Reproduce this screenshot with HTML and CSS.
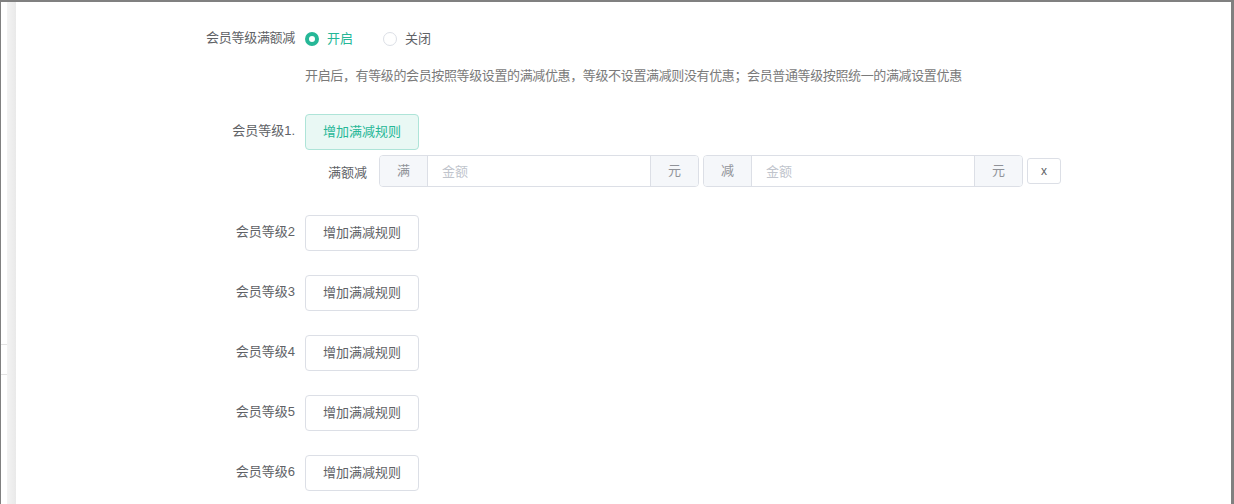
FILE: index.html
```html
<!DOCTYPE html>
<html lang="zh-CN">
  <head>
    <meta charset="UTF-8" />
    <meta name="viewport" content="width=device-width, initial-scale=1.0" />
    <title>会员等级满额减</title>
    <link rel="stylesheet" href="styles.css">
  </head>
  <body>
    <div class="frame">
      <div class="side">
        <div class="side-white"><div class="side-lines"></div></div>
        <div class="side-gray"></div>
      </div>
      <div class="main">
        <div class="form">
          <div class="row row-switch">
            <span class="label">会员等级满额减</span>
            <div class="radios">
              <span class="radio checked"><i class="dot"></i>开启</span>
              <span class="radio"><i class="dot"></i>关闭</span>
            </div>
          </div>
          <p class="tip">开启后，有等级的会员按照等级设置的满减优惠，等级不设置满减则没有优惠；会员普通等级按照统一的满减设置优惠</p>

          <div class="row row-first">
            <span class="label">会员等级1.</span>
            <span class="button active">增加满减规则</span>
          </div>
          <div class="rule">
            <span class="rule-label">满额减</span>
            <div class="group">
              <span class="addon">满</span>
              <input type="text" placeholder="金额" />
              <span class="addon addon-end">元</span>
            </div>
            <div class="group">
              <span class="addon">减</span>
              <input type="text" placeholder="金额" />
              <span class="addon addon-end">元</span>
            </div>
            <span class="close">x</span>
          </div>

          <div class="row row-level">
            <span class="label">会员等级2</span>
            <span class="button">增加满减规则</span>
          </div>
          <div class="row">
            <span class="label">会员等级3</span>
            <span class="button">增加满减规则</span>
          </div>
          <div class="row">
            <span class="label">会员等级4</span>
            <span class="button">增加满减规则</span>
          </div>
          <div class="row">
            <span class="label">会员等级5</span>
            <span class="button">增加满减规则</span>
          </div>
          <div class="row">
            <span class="label">会员等级6</span>
            <span class="button">增加满减规则</span>
          </div>
        </div>
      </div>
    </div>
  </body>
</html>
```

FILE: styles.css
```css
* {
  margin: 0;
  padding: 0;
  box-sizing: border-box;
}
body {
  font-family: "Liberation Sans", "Noto Sans CJK SC", sans-serif;
  font-size: 13px;
  color: #606266;
  background: #fff;
}
.frame {
  display: flex;
  width: 1234px;
  height: 504px;
  overflow: hidden;
  border-top: 2px solid #808080;
  border-left: 1px solid #808080;
  border-right: 3px solid #808080;
}
.side {
  display: flex;
  flex: none;
}
.side-white {
  width: 6px;
}
.side-lines {
  margin-top: 342px;
  height: 31px;
  border-top: 1px solid #e3e3e3;
  border-bottom: 1px solid #e3e3e3;
}
.side-gray {
  width: 9px;
  background: linear-gradient(to right, #f3f3f3, #e9e9e9);
}
.main {
  flex: 1;
}
.form {
  padding-left: 159px;
  padding-top: 25px;
}
.row {
  display: flex;
  align-items: center;
  height: 36px;
  margin-top: 24px;
}
.label {
  width: 130px;
  padding-right: 10px;
  text-align: right;
  flex: none;
  line-height: 18px;
  padding-bottom: 2px;
}
.row-switch {
  height: 24px;
  margin-top: 0;
}
.row-switch .label {
  letter-spacing: -0.3px;
}
.radios {
  display: flex;
  align-items: center;
}
.radio {
  display: flex;
  align-items: center;
  margin-right: 30px;
  line-height: 20px;
}
.radio .dot {
  display: inline-block;
  width: 14px;
  height: 14px;
  border: 1px solid #dcdfe6;
  border-radius: 50%;
  margin-right: 8px;
  background: #fff;
}
.radio.checked {
  color: #26b797;
}
.radio.checked .dot {
  border: 4px solid #26b797;
  background: #fff;
}
.tip {
  margin-top: 15px;
  margin-left: 130px;
  line-height: 20px;
  color: #7a7a7a;
  letter-spacing: -0.37px;
}
.row-first {
  margin-top: 28px;
}
.row-level {
  margin-top: 28px;
}
.button {
  display: inline-block;
  width: 114px;
  height: 36px;
  line-height: 34px;
  text-align: center;
  border: 1px solid #dcdfe6;
  border-radius: 4px;
  color: #606266;
  background: #fff;
  cursor: pointer;
}
.button.active {
  background: #e9f8f4;
  border-color: #aee4d8;
  color: #26b797;
}
.rule {
  display: flex;
  align-items: center;
  margin-top: 5px;
  margin-left: 130px;
  height: 32px;
}
.rule-label {
  width: 74px;
  padding-right: 12px;
  text-align: right;
}
.group {
  display: flex;
  width: 320px;
  height: 32px;
  border: 1px solid #dcdfe6;
  border-radius: 4px;
  overflow: hidden;
  margin-right: 4px;
}
.addon {
  width: 48px;
  flex: none;
  background: #f5f7fa;
  color: #909399;
  text-align: center;
  line-height: 30px;
  border-right: 1px solid #dcdfe6;
}
.addon-end {
  border-right: none;
  border-left: 1px solid #dcdfe6;
}
.group input {
  flex: 1;
  min-width: 0;
  border: none;
  outline: none;
  padding-left: 14px;
  font-family: inherit;
  font-size: 13px;
  color: #606266;
}
.group input::placeholder {
  color: #c0c4cc;
}
.close {
  width: 34px;
  height: 26px;
  line-height: 24px;
  text-align: center;
  border: 1px solid #dcdfe6;
  border-radius: 3px;
  font-size: 12px;
  color: #606266;
  cursor: pointer;
}
```
